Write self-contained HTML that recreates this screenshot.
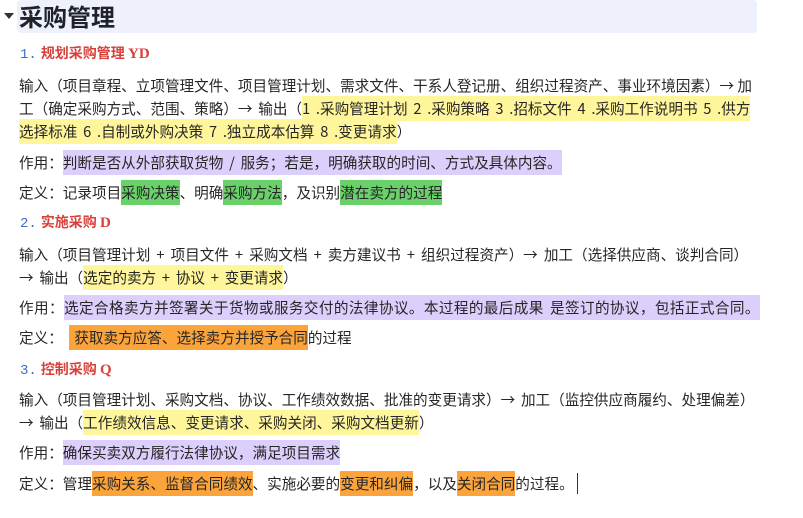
<!DOCTYPE html>
<html><head><meta charset="utf-8"><style>
body{margin:0;width:803px;height:518px;background:#fff;position:relative;overflow:hidden;font-family:"Noto Sans CJK SC","Liberation Sans",sans-serif;color:#262626;font-size:14.6px}
.t{position:absolute;left:17px;top:0;width:740px;height:33px;background:#eef0fb;border-radius:4px}
.t span{position:absolute;left:2px;top:-1px;font-size:24px;font-weight:bold;color:#1f2329;line-height:34px}
.tri{position:absolute;left:4px;top:13px;width:0;height:0;border-left:5px solid transparent;border-right:5px solid transparent;border-top:6px solid #333}
.l{position:absolute;left:19px;white-space:nowrap;line-height:23px;word-spacing:2.5px}
.h{font-weight:bold;color:#d9403a;font-size:14px;word-spacing:0}
.h b{color:#3a6fd0;font-weight:normal;font-family:"Liberation Mono",monospace;margin-right:4px}
.h i{font-style:normal;font-family:"Liberation Serif",serif;font-size:15px}
.y{background:#fff59b;padding:2px 0}
.p{background:#dccffb;padding:2px 0}
.g{background:#6ad06a;padding:2px 0}
.o{background:#fba43c;padding:2px 0}
</style></head><body>
<div class="tri"></div>
<div class="t"><span>采购管理</span></div>
<div class="l h" style="top:42px;left:20px"><b>1.</b>规划采购管理 <i>YD</i></div>
<div class="l" style="top:74px;word-spacing:0">输入（项目章程、立项管理文件、项目管理计划、需求文件、干系人登记册、组织过程资产、事业环境因素）→ 加</div>
<div class="l" style="top:97px">工（确定采购方式、范围、策略）→ 输出（<span class="y">1 .采购管理计划 2 .采购策略 3 .招标文件 4 .采购工作说明书 5 .供方</span></div>
<div class="l" style="top:120px"><span class="y">选择标准 6 .自制或外购决策 7 .独立成本估算 8 .变更请求</span>）</div>
<div class="l" style="top:151px">作用：<span class="p">判断是否从外部获取货物 / 服务；若是，明确获取的时间、方式及具体内容。</span></div>
<div class="l" style="top:181px">定义：记录项目<span class="g">采购决策</span>、明确<span class="g">采购方法</span>，及识别<span class="g">潜在卖方的过程</span></div>
<div class="l h" style="top:211px;left:20px"><b>2.</b>实施采购 <i>D</i></div>
<div class="l" style="top:243px;word-spacing:2.8px">输入（项目管理计划 + 项目文件 + 采购文档 + 卖方建议书 + 组织过程资产）→ 加工（选择供应商、谈判合同）</div>
<div class="l" style="top:266px">→ 输出（<span class="y">选定的卖方 + 协议 + 变更请求</span>）</div>
<div class="l" style="top:296px;letter-spacing:0.4px">作用：<span class="p">选定合格卖方并签署关于货物或服务交付的法律协议。本过程的最后成果 是签订的协议，包括正式合同。</span></div>
<div class="l" style="top:326px">定义： <span class="o">&nbsp;获取卖方应答、选择卖方并授予合同</span>的过程</div>
<div class="l h" style="top:358px;left:20px"><b>3.</b>控制采购 <i>Q</i></div>
<div class="l" style="top:388px">输入（项目管理计划、采购文档、协议、工作绩效数据、批准的变更请求）→ 加工（监控供应商履约、处理偏差）</div>
<div class="l" style="top:411px">→ 输出（<span class="y">工作绩效信息、变更请求、采购关闭、采购文档更新</span>）</div>
<div class="l" style="top:441px">作用：<span class="p">确保买卖双方履行法律协议，满足项目需求</span></div>
<div class="l" style="top:472px">定义：管理<span class="o">采购关系、监督合同绩效</span>、实施必要的<span class="o">变更和纠偏</span>，以及<span class="o">关闭合同</span>的过程。<span style="border-left:1px solid #333;margin-left:3px"></span></div>
</body></html>
